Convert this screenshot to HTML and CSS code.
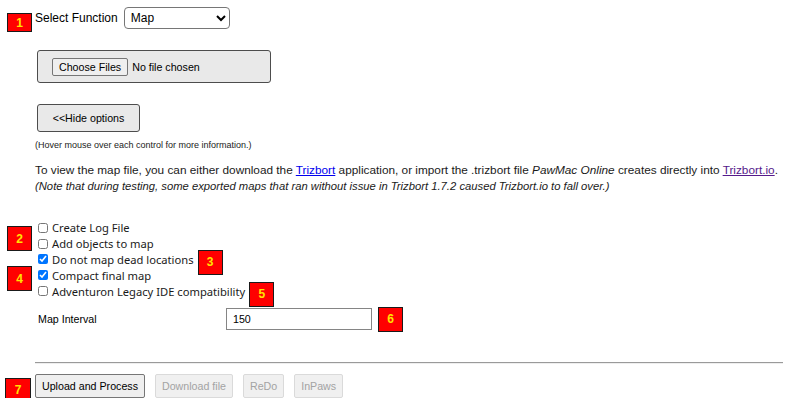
FILE: index.html
```html
<!DOCTYPE html>
<html lang="en">
<head>
    <meta charset="UTF-8">
    <title>PawMac Online</title>
    <link rel="stylesheet" href="styles.css">
</head>
<body>
    <div class="page">

        <div class="fn-row">
            <span class="badge badge-1">1</span>
            <label for="fn">Select Function</label>
            <select id="fn" class="fn-select">
                <option>Map</option>
                <option>Walkthrough</option>
                <option>Dump</option>
            </select>
        </div>

        <div class="file-box">
            <input type="file" multiple class="file-input">
        </div>

        <button class="toggle-btn">&lt;&lt;Hide options</button>

        <p class="hint">(Hover mouse over each control for more information.)</p>

        <p class="info">
            <span class="info-line">To view the map file, you can either download the <a href="#" class="link">Trizbort</a> application, or import the .trizbort file <em>PawMac Online</em> creates directly into <a href="#" class="link visited">Trizbort.io</a>.</span><br>
            <em class="info-note">(Note that during testing, some exported maps that ran without issue in Trizbort 1.7.2 caused Trizbort.io to fall over.)</em>
        </p>

        <div class="opts">
            <span class="badge badge-2">2</span>
            <span class="badge badge-4">4</span>
            <label class="opt"><input type="checkbox"> Create Log File</label>
            <label class="opt"><input type="checkbox"> Add objects to map</label>
            <label class="opt"><input type="checkbox" checked> Do not map dead locations <span class="badge badge-inline">3</span></label>
            <label class="opt"><input type="checkbox" checked> Compact final map</label>
            <label class="opt"><input type="checkbox"> Adventuron Legacy IDE compatibility <span class="badge badge-inline">5</span></label>
        </div>

        <div class="interval-row">
            <label for="interval" class="interval-label">Map Interval</label>
            <input type="text" id="interval" class="interval-input" value="150">
            <span class="badge badge-6">6</span>
        </div>

        <hr class="divider">

        <div class="actions">
            <span class="badge badge-7">7</span>
            <button class="action-btn">Upload and Process</button>
            <button class="action-btn" disabled>Download file</button>
            <button class="action-btn" disabled>ReDo</button>
            <button class="action-btn" disabled>InPaws</button>
        </div>

    </div>
</body>
</html>
```

FILE: styles.css
```css
body {
    margin: 0;
    background-color: #ffffff;
    color: #000000;
    font-family: 'Liberation Sans', Arial, sans-serif;
    font-size: 12px;
}

.page {
    position: relative;
    padding: 0 4px 0 35px;
}

/* annotation markers */
.badge {
    position: absolute;
    box-sizing: border-box;
    width: 25px;
    height: 25px;
    background-color: #ff0000;
    border: 1px solid #1a1a1a;
    color: #ffe400;
    font-family: 'Liberation Sans', Arial, sans-serif;
    font-size: 12px;
    font-weight: bold;
    display: flex;
    align-items: center;
    justify-content: center;
}

.badge-1 {
    left: -28px;
    top: 6px;
    height: 19px;
}

.badge-2 {
    left: -28px;
    top: 6px;
}

.badge-4 {
    left: -28px;
    top: 46px;
}

.badge-inline,
.badge-6 {
    position: static;
    flex-shrink: 0;
}

.badge-inline {
    margin: -2px 0 -8px 4px;
}

.badge-6 {
    margin-left: 6px;
}

.badge-7 {
    left: -30px;
    top: 4px;
    width: 26px;
    height: 24px;
}

.fn-row {
    position: relative;
    display: flex;
    align-items: center;
    height: 22px;
    margin-top: 7px;
}

.fn-select {
    margin-left: 6px;
    width: 106px;
    height: 22px;
    padding: 0 2px;
    border: 1px solid #767676;
    border-radius: 4px;
    background-color: #ffffff;
    font-family: 'Liberation Sans', Arial, sans-serif;
    font-size: 12px;
    color: #000000;
}

.file-box {
    box-sizing: border-box;
    display: flex;
    align-items: center;
    width: 234px;
    height: 33px;
    margin: 21px 0 0 2px;
    padding-left: 14px;
    background-color: #e9e9e9;
    border: 1px solid #4d4d4d;
    border-radius: 3px;
}

.file-input {
    font-family: 'Liberation Sans', Arial, sans-serif;
    font-size: 10.67px;
    color: #000000;
}

.file-input::file-selector-button {
    height: 18px;
    padding: 0 6px;
    margin-right: 4px;
    background-color: #efefef;
    border: 1px solid #767676;
    border-radius: 2px;
    font-family: inherit;
    font-size: 10.67px;
}

.toggle-btn {
    display: block;
    box-sizing: border-box;
    width: 103px;
    height: 28px;
    margin: 21px 0 0 2px;
    background-color: #e9e9e9;
    border: 1px solid #4d4d4d;
    border-radius: 3px;
    font-family: 'Liberation Sans', Arial, sans-serif;
    font-size: 10.67px;
    color: #000000;
}

.hint {
    margin: 7px 0 0;
    font-size: 9px;
    line-height: 12px;
    color: #222222;
}

.info {
    margin: 11px 0 0;
    line-height: 16px;
    color: #1a1a1a;
    white-space: nowrap;
}

.info-line {
    font-size: 11.8px;
}

.info-note {
    font-size: 11.25px;
}

.link {
    color: #0000ee;
}

.link.visited {
    color: #551a8b;
}

.opts {
    position: relative;
    margin-top: 26px;
}

.opt {
    display: flex;
    align-items: center;
    height: 15.8px;
    font-family: 'Noto Sans', 'Open Sans', sans-serif;
    font-size: 11.2px;
    color: #1a1a1a;
}

.opt input {
    width: 10px;
    height: 10px;
    margin: 0 4px 0 3px;
}

.interval-row {
    display: flex;
    align-items: center;
    margin-top: 8px;
}

.interval-label {
    width: 188px;
    margin-left: 3px;
    font-size: 10.67px;
}

.interval-input {
    box-sizing: border-box;
    width: 146px;
    height: 22px;
    padding: 0 6px;
    border: 1px solid #858585;
    font-family: 'Liberation Sans', Arial, sans-serif;
    font-size: 10.67px;
    color: #000000;
}

.divider {
    margin: 30px 0 0;
    border: 0;
    border-top: 1px solid #9a9a9a;
    border-bottom: 1px solid #eeeeee;
}

.actions {
    position: relative;
    display: flex;
    gap: 10px;
    margin-top: 10px;
}

.action-btn {
    height: 24px;
    padding: 0 6px;
    background-color: #efefef;
    border: 1px solid #767676;
    border-radius: 2px;
    font-family: 'Liberation Sans', Arial, sans-serif;
    font-size: 10.67px;
    color: #000000;
}

.action-btn:disabled {
    background-color: #f0f0f0;
    border-color: #dadada;
    color: #a3a3a3;
}
```
